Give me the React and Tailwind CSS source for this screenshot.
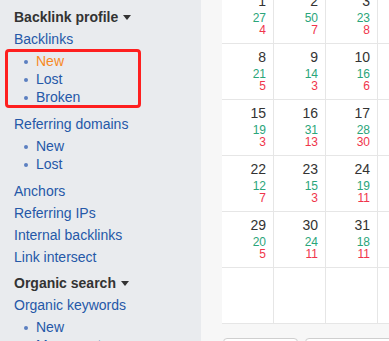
import React from 'react';

const rows = [
  [['1', '27', '4'], ['2', '50', '7'], ['3', '23', '8'], ['4', '', '']],
  [['8', '21', '5'], ['9', '14', '3'], ['10', '16', '6'], ['11', '', '']],
  [['15', '19', '3'], ['16', '31', '13'], ['17', '28', '30'], ['18', '', '']],
  [['22', '12', '7'], ['23', '15', '3'], ['24', '19', '11'], ['25', '', '']],
  [['29', '20', '5'], ['30', '24', '11'], ['31', '18', '11'], ['', '', '']],
  [['', '', ''], ['', '', ''], ['', '', ''], ['', '', '']],
];

function Caret() {
  return (
    <svg width="8" height="5" viewBox="0 0 8 5" className="ml-[5px] mt-[1px]">
      <path d="M0 0 L8 0 L4 5 Z" fill="#333" />
    </svg>
  );
}

function SubList({ items, boxed }) {
  return (
    <ul className="relative mt-[2px] mb-[7px] pl-[10px] leading-[18px]">
      {items.map((it) => (
        <li key={it.label} className="flex items-center">
          <span className="w-[4px] h-[4px] rounded-full bg-[#5b7fc0] mr-[8px] mt-[1px]"></span>
          <span className={it.active ? 'text-[#f7891f]' : 'text-[#2558a8]'}>{it.label}</span>
        </li>
      ))}
      {boxed && (
        <div className="absolute left-[-9px] top-[-3px] w-[136px] h-[59px] border-[3px] border-[#fe1f1f] rounded-[4px]"></div>
      )}
    </ul>
  );
}

function Sidebar() {
  return (
    <div className="w-[201px] shrink-0 bg-[#e9ebee] pl-[14px] pt-[6px] text-[14px] leading-[22px]">
      <div className="flex items-center font-bold text-[#333]">
        Backlink profile <Caret />
      </div>
      <div className="text-[#2558a8]">Backlinks</div>
      <SubList
        boxed
        items={[{ label: 'New', active: true }, { label: 'Lost' }, { label: 'Broken' }]}
      />
      <div className="text-[#2558a8]">Referring domains</div>
      <SubList items={[{ label: 'New' }, { label: 'Lost' }]} />
      <div className="text-[#2558a8]">Anchors</div>
      <div className="text-[#2558a8]">Referring IPs</div>
      <div className="text-[#2558a8]">Internal backlinks</div>
      <div className="text-[#2558a8]">Link intersect</div>
      <div className="flex items-center font-bold text-[#333] mt-[4px]">
        Organic search <Caret />
      </div>
      <div className="text-[#2558a8]">Organic keywords</div>
      <SubList items={[{ label: 'New' }, { label: 'Movements' }]} />
    </div>
  );
}

function Cell({ day, gained, lost }) {
  return (
    <div className="h-[56px] border-r border-b border-[#e6e6e6] pr-[7px] pt-[5px] text-right">
      <div className="text-[14px] leading-[16px] text-[#333]">{day}</div>
      <div className="mt-[3px] text-[12px] leading-[12px] text-[#2aa57a]">{gained}</div>
      <div className="text-[12px] leading-[12px] text-[#f0354b]">{lost}</div>
    </div>
  );
}

export default function App() {
  return (
    <div
      className="flex w-[389px] h-[341px] overflow-hidden"
      style={{ fontFamily: '"Liberation Sans", Arial, sans-serif' }}
    >
      <Sidebar />
      <div className="flex-1 bg-[#f7f7f7] pl-[21px] overflow-hidden">
        <div className="-mt-[12px] w-[260px] bg-white grid grid-cols-[repeat(5,52px)]">
          {rows.map((row, r) =>
            [...row, ['', '', '']].map((c, i) => (
              <Cell key={r + '-' + i} day={c[0]} gained={c[1]} lost={c[2]} />
            ))
          )}
        </div>
        <div className="mt-[14px] flex gap-[7px] pl-[1px]">
          <div className="w-[75px] h-[30px] shrink-0 bg-white border border-[#cfcfcf] rounded-[4px]"></div>
          <div className="w-[120px] h-[30px] shrink-0 bg-white border border-[#cfcfcf] rounded-[4px]"></div>
        </div>
      </div>
    </div>
  );
}
